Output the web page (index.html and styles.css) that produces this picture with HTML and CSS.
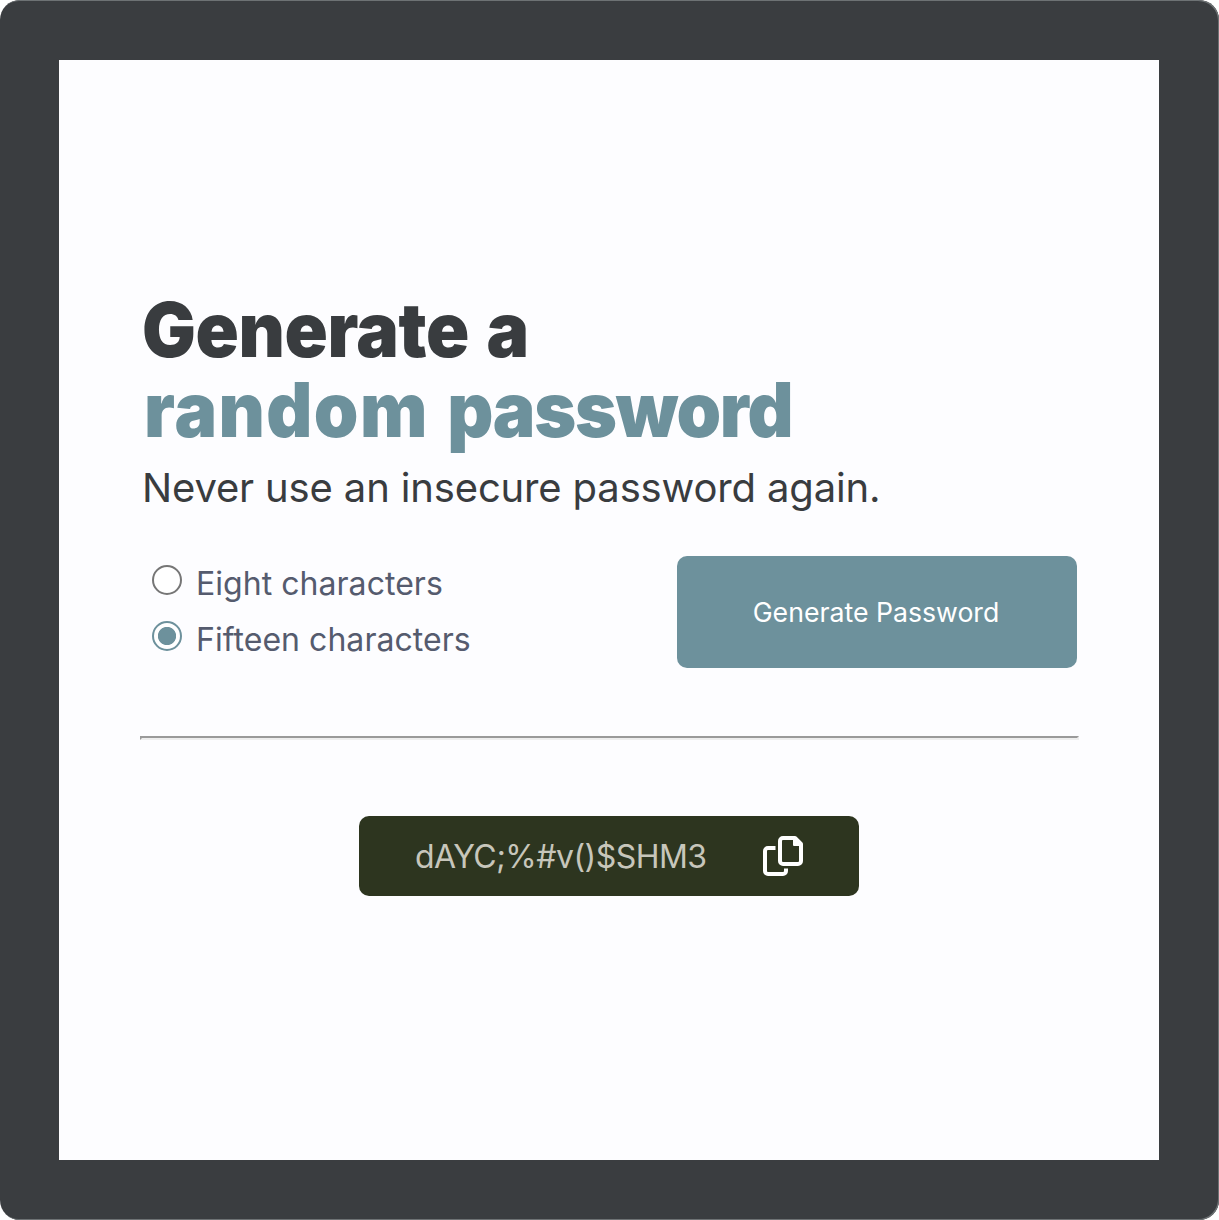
FILE: index.html
```html
<!DOCTYPE html>
<html lang="en">
<head>
<meta charset="utf-8">
<title>Password Generator</title>
<link rel="stylesheet" href="styles.css">
</head>
<body>
<div class="frame">
<main class="card">
<h1 class="title"><span class="title-top">Generate a</span><span class="title-accent"><span class="word-wide">random </span><span class="word-tight">password</span></span></h1>
<p class="subtitle">Never use an insecure password again.</p>
<form class="controls">
<div class="options">
<label class="option"><span class="radio"></span><span>Eight characters</span></label>
<label class="option"><span class="radio radio-on"></span><span>Fifteen characters</span></label>
</div>
<button class="generate" type="button">Generate Password</button>
</form>
<hr class="divider">
<div class="result"><span class="password">dAYC;%#v()$SHM3</span>
<svg class="copy" viewBox="0 0 40 40" fill="none" stroke="#fff" stroke-width="4" stroke-linejoin="round"><path d="M20 2h12l6 6v17a3 3 0 0 1-3 3H20a3 3 0 0 1-3-3V5a3 3 0 0 1 3-3Z"/><path d="M12.5 12H5a3 3 0 0 0-3 3v20a3 3 0 0 0 3 3h15a3 3 0 0 0 3-3v-2.5"/><path d="M31 2v7h7" fill="#fff" stroke-width="2"/></svg>
</div>
</main>
</div>
</body>
</html>
```
FILE: styles.css
```css
* { box-sizing: border-box; }
body { margin: 0; background: #fff; font-family: Inter, sans-serif; }
.frame { width: 1219px; height: 1220px; padding: 60px 60px 60px 59px; background: #3a3d40; border-radius: 20px; box-shadow: inset -1px 1px #6d7274, inset -1px -1px #6d7274; }
.card { height: 1100px; padding: 229px 80px 0 81px; background: #fdfdff; display: flex; flex-direction: column; }
.title { margin: 0 0 0 2px; font-size: 76px; line-height: 80px; font-weight: 900; color: #393c3f; white-space: nowrap; transform: scaleX(0.94); transform-origin: left; }
.title-top, .title-accent { display: block; }
.title-top { letter-spacing: -0.4px; word-spacing: 4px; }
.title-accent { padding-left: 2px; color: #6d919c; }
.word-wide { letter-spacing: 1.5px; word-spacing: 3px; }
.word-tight { letter-spacing: -1.3px; }
.subtitle { margin: 14px 0 0 2px; font-size: 40px; line-height: 50px; letter-spacing: -0.15px; color: #393c3f; white-space: nowrap; }
.controls { margin-top: 43px; display: flex; justify-content: space-between; padding-right: 2px; }
.options { margin-top: -1px; padding-left: 12px; }
.option { display: flex; align-items: center; gap: 14px; height: 56px; font-size: 32px; letter-spacing: 0.04px; color: #555b6e; }
.radio { width: 30px; height: 30px; margin-top: -7px; border: 2px solid #767676; border-radius: 50%; background: #fff; }
.radio-on { border-color: #6d919c; background: radial-gradient(circle, #6d919c 8.7px, #fff 9.5px); }
.generate { width: 400px; height: 112px; padding: 0 2px 0 0; border: 0; border-radius: 10px; background: #6d919c; color: #fff; font: 400 26.67px Inter, sans-serif; }
.divider { width: 939px; height: 4px; margin: 68px 0 0; border: 2px solid; border-color: #9a9a9a #eee #eee #9a9a9a; }
.result { width: 500px; height: 80px; margin: 76px 0 0 219px; padding: 0 56px; border-radius: 10px; background: #2d351f; display: flex; align-items: center; justify-content: space-between; color: #c7c6bb; font-size: 32px; }
.password { letter-spacing: -0.53px; }
.copy { width: 40px; height: 40px; }
```
